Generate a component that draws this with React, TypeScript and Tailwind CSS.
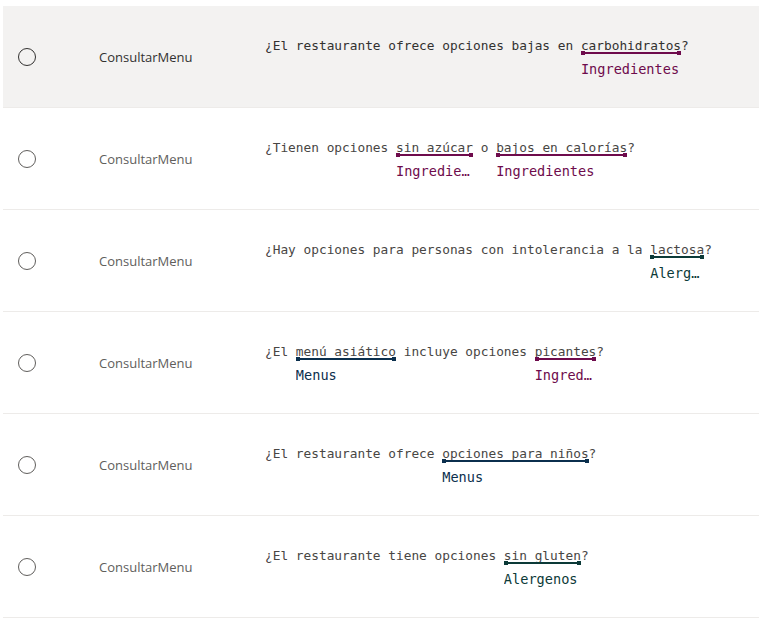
import React from 'react';

type Kind = 'ing' | 'ale' | 'men';
type Seg = string | { text: string; label: string; kind: Kind };

const colors = {
  ing: { line: 'bg-[#6e0b4c]', text: 'text-[#6e0b4c]' },
  ale: { line: 'bg-[#0c3a38]', text: 'text-[#0c3a38]' },
  men: { line: 'bg-[#0b2f4d]', text: 'text-[#0b2f4d]' },
};

const rows: Seg[][] = [
  ['¿El restaurante ofrece opciones bajas en ', { text: 'carbohidratos', label: 'Ingredientes', kind: 'ing' }, '?'],
  [
    '¿Tienen opciones ',
    { text: 'sin azúcar', label: 'Ingredientes', kind: 'ing' },
    ' o ',
    { text: 'bajos en calorías', label: 'Ingredientes', kind: 'ing' },
    '?',
  ],
  ['¿Hay opciones para personas con intolerancia a la ', { text: 'lactosa', label: 'Alergenos', kind: 'ale' }, '?'],
  [
    '¿El ',
    { text: 'menú asiático', label: 'Menus', kind: 'men' },
    ' incluye opciones ',
    { text: 'picantes', label: 'Ingredientes', kind: 'ing' },
    '?',
  ],
  ['¿El restaurante ofrece ', { text: 'opciones para niños', label: 'Menus', kind: 'men' }, '?'],
  ['¿El restaurante tiene opciones ', { text: 'sin gluten', label: 'Alergenos', kind: 'ale' }, '?'],
];

// entity span: underline with square ends, label tag below (truncated to entity width)
function Entity({ text, label, kind }: { text: string; label: string; kind: Kind }) {
  const c = colors[kind];
  return (
    <span className="relative inline-block">
      {text}
      <span className={`absolute left-0 right-0 bottom-[3px] h-[2px] ${c.line}`} />
      <span className={`absolute left-0 bottom-[2px] w-[4px] h-[4px] ${c.line}`} />
      <span className={`absolute right-0 bottom-[2px] w-[4px] h-[4px] ${c.line}`} />
      <span
        className={`absolute left-0 top-[23px] block max-w-full overflow-hidden text-ellipsis whitespace-nowrap text-[13.6px] ${c.text}`}
      >
        {label}
      </span>
    </span>
  );
}

export default function App() {
  return (
    <div className="bg-white w-[759px] h-[619px] pt-[6px] pl-[3px] overflow-hidden">
      {rows.map((segs, i) => {
        const selected = i === 0;
        return (
          <div
            key={i}
            className={`flex items-center h-[102px] border-b border-[#edebe9] ${selected ? 'bg-[#f3f2f1]' : 'bg-white'}`}
          >
            <div className="w-[96px] pl-[15px] flex items-center">
              <div
                className={`w-[18px] h-[18px] rounded-full border ${selected ? 'border-[#323130]' : 'border-[#605e5c]'}`}
              />
            </div>
            <div
              className={`w-[166px] text-[13px] pt-[2px] ${selected ? 'text-[#323130]' : 'text-[#605e5c]'}`}
              style={{ fontFamily: '"Open Sans", "Noto Sans", sans-serif' }}
            >
              ConsultarMenu
            </div>
            <div
              className={`whitespace-pre leading-[22px] text-[12.8px] pb-[22px] ${selected ? 'text-[#323130]' : 'text-[#484644]'}`}
              style={{ fontFamily: '"DejaVu Sans Mono", "Liberation Mono", monospace' }}
            >
              {segs.map((s, j) =>
                typeof s === 'string' ? <span key={j}>{s}</span> : <Entity key={j} {...s} />
              )}
            </div>
          </div>
        );
      })}
    </div>
  );
}
